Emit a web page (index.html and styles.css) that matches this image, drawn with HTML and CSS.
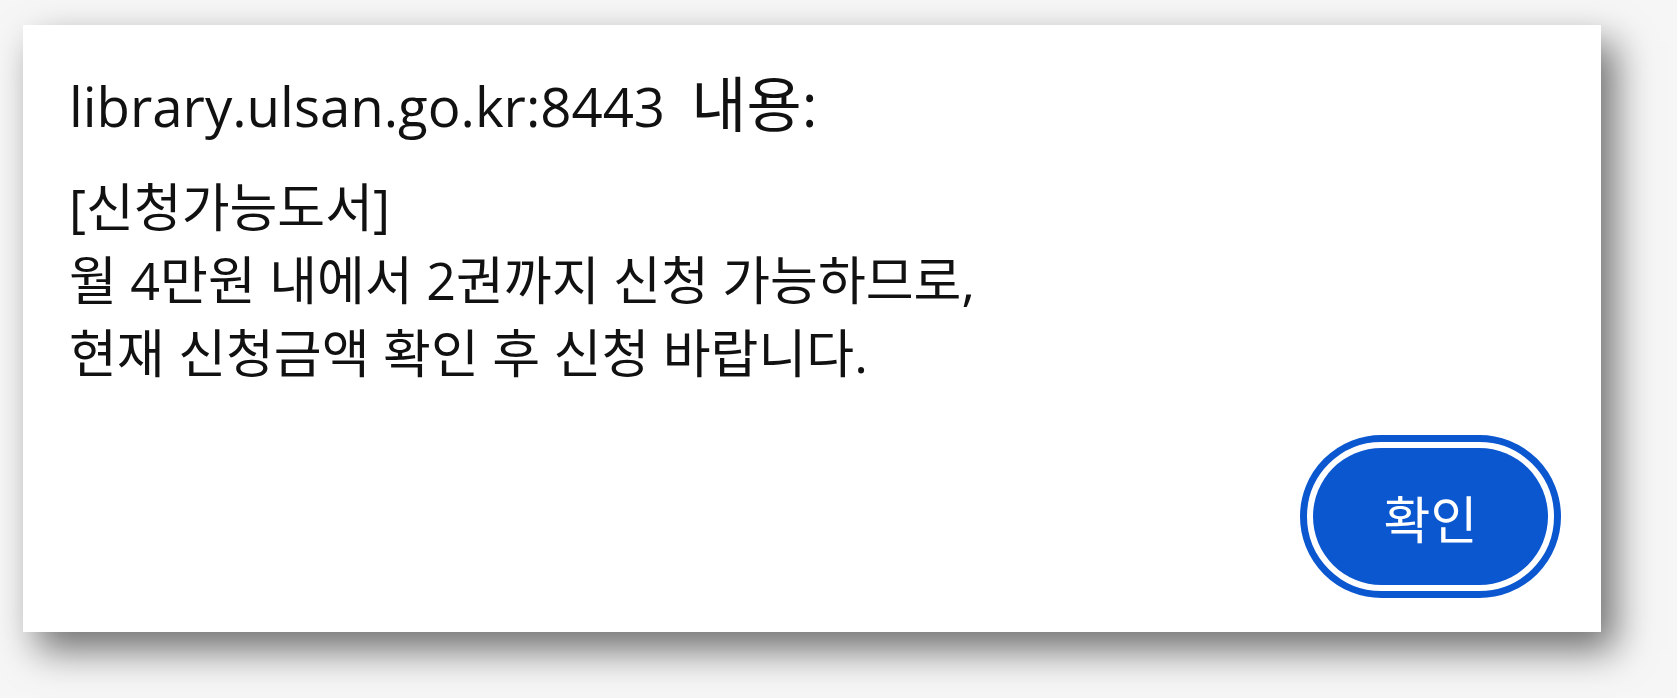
FILE: index.html
```html
<!DOCTYPE html>
<html lang="ko">
  <head>
    <meta charset="UTF-8" />
    <meta name="viewport" content="width=device-width, initial-scale=1.0" />
    <title>library.ulsan.go.kr:8443 내용</title>
    <link rel="stylesheet" href="styles.css">
  </head>

  <body>
    <div class="dialog">
      <div class="title">library.ulsan.go.kr:8443 <span class="label">내용:</span></div>
      <div class="message">
        <p>[신청가능도서]</p>
        <p>월 4만원 내에서 2권까지 신청 가능하므로,</p>
        <p>현재 신청금액 확인 후 신청 바랍니다.</p>
      </div>
      <div class="actions">
        <button class="ok" type="button">확인</button>
      </div>
    </div>
  </body>
</html>
```

FILE: styles.css
```css
* {
  margin: 0;
  padding: 0;
  box-sizing: border-box;
  font-family: "Open Sans", "Noto Sans CJK KR", sans-serif;
}

body {
  width: 100%;
  height: 100vh;
  padding: 25px 0 0 23px;
  background-color: #f6f6f6;
  overflow: hidden;
}

.dialog {
  display: flex;
  flex-direction: column;
  width: 1578px;
  height: 607px;
  padding: 44px 53px 47px 46px;
  background: #fff;
  color: #111;
  box-shadow: 14px 18px 36px rgba(0, 0, 0, 0.55);
}

.title {
  font-size: 54.6px;
  line-height: 70px;
  word-spacing: 12px;
}

.title .label {
  font-size: 60px;
  word-spacing: 0;
}

.message {
  margin-top: 29px;
  font-size: 52px;
  line-height: 73px;
}

.actions {
  display: flex;
  justify-content: flex-end;
  margin-top: auto;
}

.ok {
  width: 235px;
  height: 137px;
  border: none;
  border-radius: 70px;
  background-color: #0b57d0;
  color: #fff;
  font-size: 51px;
  outline: 7px solid #0b57d0;
  outline-offset: 6px;
}
```
